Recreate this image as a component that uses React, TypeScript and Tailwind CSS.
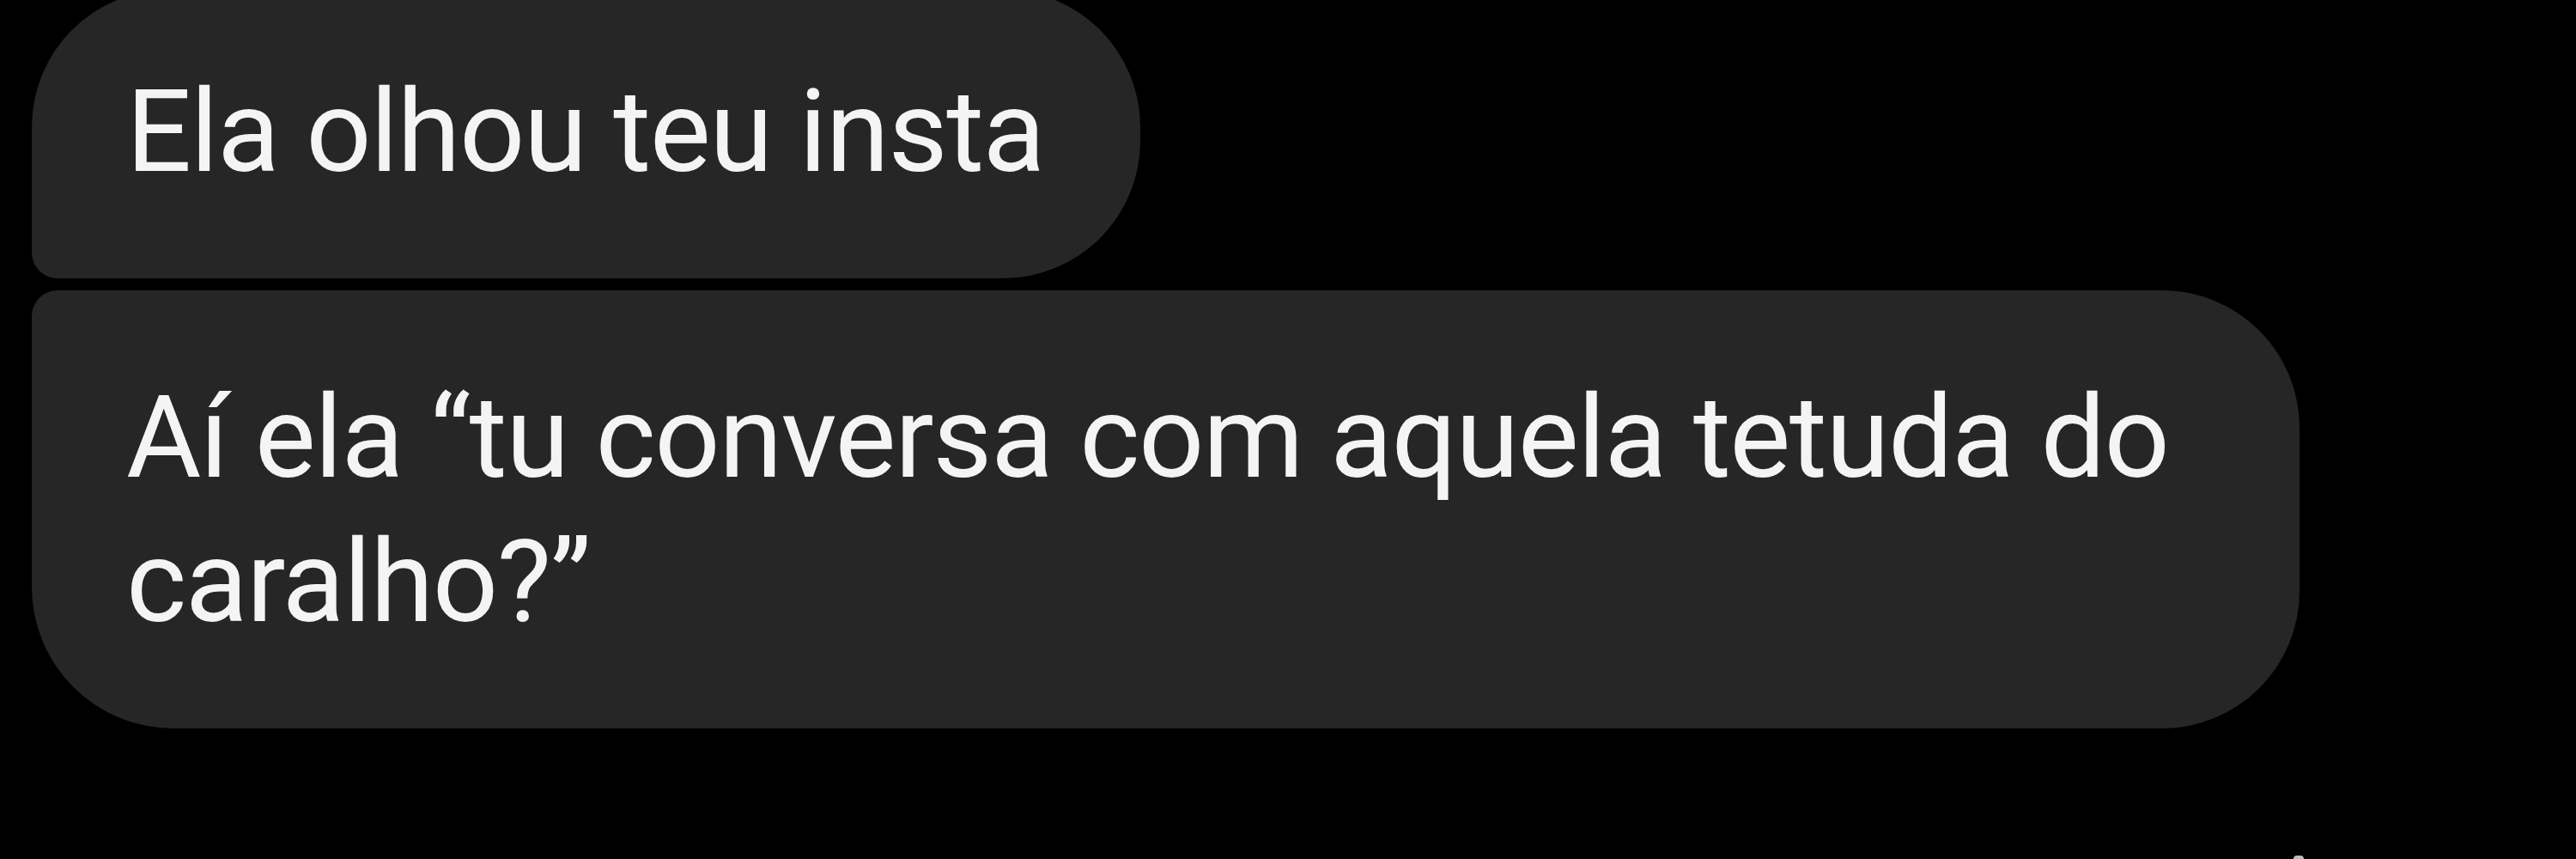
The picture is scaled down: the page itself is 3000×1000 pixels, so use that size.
const font = { fontFamily: "Roboto, 'Noto Sans', sans-serif" };

export default function App() {
  return (
    <div
      className="w-[3000px] h-[1000px] bg-black overflow-hidden flex flex-col"
      style={font}
    >
      <div className="flex flex-col gap-[14px] pl-[37px] -mt-[12px]">
        <div className="w-[1291px] bg-[#262626] rounded-tl-[160px] rounded-tr-[160px] rounded-br-[160px] rounded-bl-[30px] pl-[110px] pt-[82px] pb-[86px]">
          <p className="text-[134px] leading-[168px] tracking-[-1.4px] text-[#f4f4f4]">
            Ela olhou teu insta
          </p>
        </div>
        <div className="w-[2641px] bg-[#262626] rounded-tl-[30px] rounded-tr-[160px] rounded-br-[160px] rounded-bl-[165px] pl-[110px] pr-[100px] pt-[88px] pb-[86px]">
          <p className="text-[134px] leading-[168px] tracking-[-1.4px] text-[#f4f4f4]">
            Aí ela “tu conversa com aquela tetuda do caralho?”
          </p>
        </div>
      </div>
      <div className="mt-auto flex pl-[2671px]">
        <div className="w-[12px] h-[4px] rounded-t-full bg-[#bdbdbd]" />
      </div>
    </div>
  );
}
